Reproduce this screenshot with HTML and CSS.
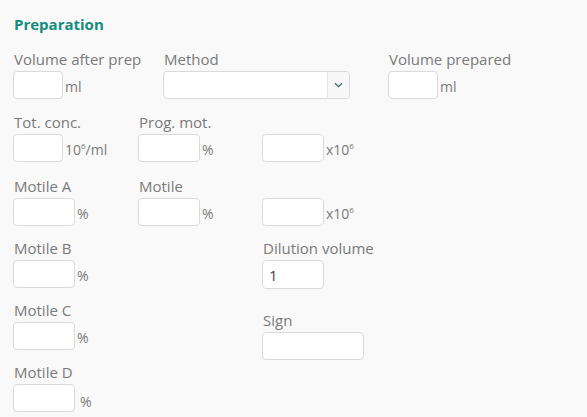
FILE: index.html
```html
<!DOCTYPE html>
<html lang="en">
<head>
<meta charset="utf-8">
<title>Preparation</title>
<link rel="stylesheet" href="styles.css">
</head>
<body>
<div class="panel">
  <h2 class="title">Preparation</h2>

  <div class="row">
    <div class="field w-150">
      <label class="lbl">Volume after prep</label>
      <div class="ctl"><input class="in in-50" type="text"><span class="unit">ml</span></div>
    </div>
    <div class="field w-225">
      <label class="lbl">Method</label>
      <div class="select">
        <span class="sel-body"></span>
        <span class="sel-btn"><svg width="9" height="6" viewBox="0 0 9 6"><path d="M1 1.2 L4.5 4.6 L8 1.2" fill="none" stroke="#3f6666" stroke-width="1.2"/></svg></span>
      </div>
    </div>
    <div class="field">
      <label class="lbl">Volume prepared</label>
      <div class="ctl"><input class="in in-50" type="text"><span class="unit">ml</span></div>
    </div>
  </div>

  <div class="row r2">
    <div class="field w-125">
      <label class="lbl">Tot. conc.</label>
      <div class="ctl"><input class="in in-50" type="text"><span class="unit">10<sup>6</sup>/ml</span></div>
    </div>
    <div class="field w-124">
      <label class="lbl">Prog. mot.</label>
      <div class="ctl"><input class="in in-62" type="text"><span class="unit pct">%</span></div>
    </div>
    <div class="field">
      <label class="lbl">&nbsp;</label>
      <div class="ctl"><input class="in in-62" type="text"><span class="unit">x10<sup>6</sup></span></div>
    </div>
  </div>

  <div class="row r3">
    <div class="field w-125">
      <label class="lbl">Motile A</label>
      <div class="ctl"><input class="in in-62" type="text"><span class="unit pct">%</span></div>
    </div>
    <div class="field w-124">
      <label class="lbl">Motile</label>
      <div class="ctl"><input class="in in-62" type="text"><span class="unit pct">%</span></div>
    </div>
    <div class="field">
      <label class="lbl">&nbsp;</label>
      <div class="ctl"><input class="in in-62" type="text"><span class="unit">x10<sup>6</sup></span></div>
    </div>
  </div>

  <div class="lower">
    <div class="col-left">
      <div class="field">
        <label class="lbl">Motile B</label>
        <div class="ctl"><input class="in in-62" type="text"><span class="unit pct">%</span></div>
      </div>
      <div class="field">
        <label class="lbl">Motile C</label>
        <div class="ctl"><input class="in in-62" type="text"><span class="unit pct">%</span></div>
      </div>
      <div class="field">
        <label class="lbl">Motile D</label>
        <div class="ctl"><input class="in in-62" type="text"><span class="unit pct pct-low">%</span></div>
      </div>
    </div>
    <div class="col-right">
      <div class="field">
        <label class="lbl lbl-gap">Dilution volume</label>
        <div class="ctl"><input class="in in-62 tall" type="text" value="1"></div>
      </div>
      <div class="field sign">
        <label class="lbl">Sign</label>
        <div class="ctl"><input class="in in-102" type="text"></div>
      </div>
    </div>
  </div>
</div>
</body>
</html>
```

FILE: styles.css
```css
html, body {
  margin: 0;
  padding: 0;
  background: #f9f9f9;
}

body {
  font-family: "Open Sans", "Noto Sans", sans-serif;
  color: #777;
  width: 587px;
  height: 417px;
  overflow: hidden;
}

.panel {
  padding: 14px 0 0 13px;
}

.title {
  margin: 0 0 0 1px;
  font-size: 15px;
  line-height: 20px;
  font-weight: 700;
  color: #178c80;
}

.row {
  display: flex;
  margin-top: 15px;
}

.r2 {
  margin-top: 13px;
}

.r3 {
  margin-top: 14px;
}

.field {
  display: flex;
  flex-direction: column;
}

.w-150 { width: 150px; }
.w-225 { width: 225px; }
.w-125 { width: 125px; }
.w-124 { width: 124px; }

.lbl {
  display: block;
  font-size: 15px;
  line-height: 21px;
  margin: 0 0 1px 1px;
  color: #7a7a7a;
  white-space: nowrap;
}

.ctl {
  display: flex;
  align-items: center;
}

.in {
  box-sizing: border-box;
  height: 28px;
  margin: 0;
  padding: 0 6px;
  border: 1px solid #dadada;
  border-radius: 4px;
  background: #fff;
  font-family: "Open Sans", "Noto Sans", sans-serif;
  font-size: 15px;
  color: #444;
  outline: none;
}

.in-50 { width: 50px; }
.in-62 { width: 62px; }
.in-102 { width: 102px; }

.tall {
  height: 29px;
}

.unit {
  margin-left: 2px;
  font-size: 14px;
  line-height: 20px;
  padding-top: 3px;
  color: #7a7a7a;
  white-space: nowrap;
}

.unit sup {
  font-size: 8px;
  line-height: 0;
  vertical-align: 6px;
}

.pct {
  margin-left: 2px;
  font-size: 14px;
  letter-spacing: -1px;
}

.pct-low {
  margin-left: 5px;
  padding-top: 8px;
}

.select {
  box-sizing: border-box;
  display: flex;
  width: 187px;
  height: 28px;
  border: 1px solid #dadada;
  border-radius: 4px;
  background: #fff;
  overflow: hidden;
}

.sel-body {
  flex: 1;
}

.sel-btn {
  width: 21px;
  display: flex;
  align-items: center;
  justify-content: center;
  border-left: 1px solid #e4e4e4;
  background: #f7f7f7;
}

.lower {
  display: flex;
  margin-top: 12px;
}

.col-left {
  width: 249px;
  display: flex;
  flex-direction: column;
  gap: 12px;
}

.col-right {
  display: flex;
  flex-direction: column;
}

.lbl-gap {
  margin-bottom: 1px;
}

.sign {
  margin-top: 21px;
}
```
